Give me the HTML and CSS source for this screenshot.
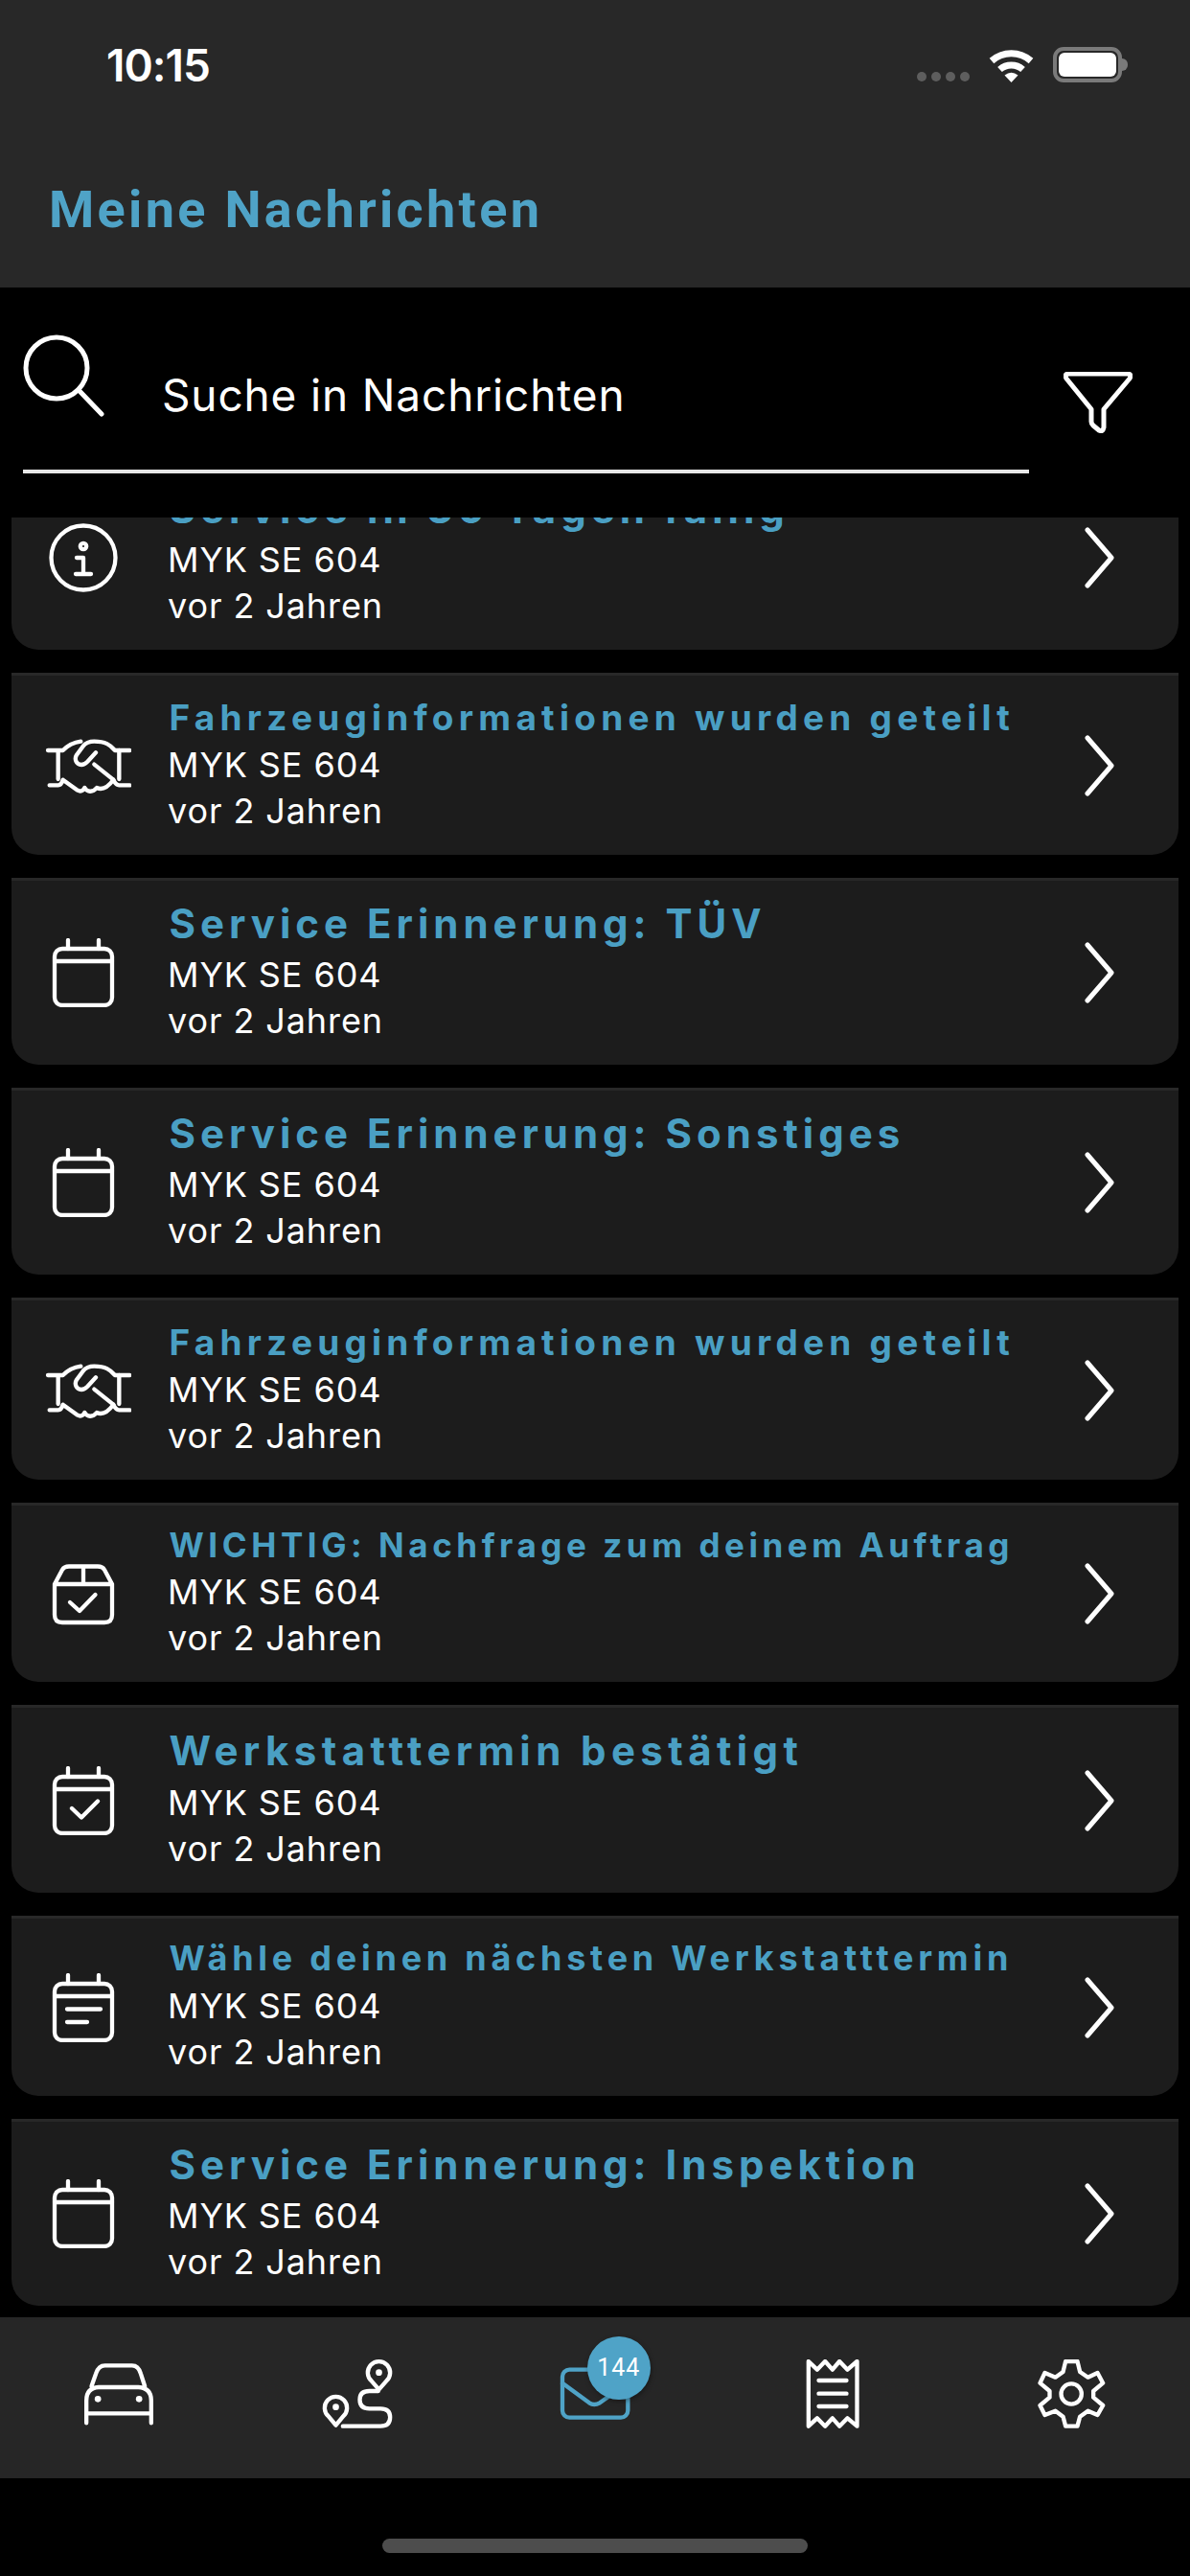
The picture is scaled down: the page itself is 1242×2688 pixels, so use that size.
FILE: index.html
```html
<!DOCTYPE html>
<html lang="de">
<head>
    <meta charset="UTF-8">
    <meta name="viewport" content="width=device-width, initial-scale=1.0">
    <title>Meine Nachrichten</title>
    <link rel="stylesheet" href="styles.css">
</head>
<body>
    <svg class="sprite" xmlns="http://www.w3.org/2000/svg">
        <symbol id="i-info" viewBox="0 0 100 72">
            <circle cx="50" cy="36" r="33.5"/>
            <path d="M43 36H50V53M42 53H58"/>
            <circle class="fill" cx="50" cy="24" r="3.2"/>
        </symbol>
        <symbol id="i-hands" viewBox="21 93 300 216">
            <g stroke-width="13">
                <path d="M60 153H107C125 135 140 128 163 125M92 153V243M65 262H92C100 262 104 256 107 245L153 278C162 283 170 280 175 270C183 284 200 286 213 270C228 277 245 272 265 245L205 197"/>
                <path d="M316 153H270C255 135 240 125 205 125C188 125 178 130 170 140L150 167C142 180 148 197 165 198C172 198 178 194 184 188L210 160"/>
                <path d="M283 153V243M316 262H283C276 262 270 256 265 245"/>
            </g>
        </symbol>
        <symbol id="i-cal" viewBox="0 0 100 72">
            <rect x="20" y="11" width="60" height="59" rx="8"/>
            <path d="M20 24H80M34 2V11M66 2V11"/>
        </symbol>
        <symbol id="i-cal-check" viewBox="0 0 100 72">
            <rect x="20" y="11" width="60" height="59" rx="8"/>
            <path d="M20 24H80M34 2V11M66 2V11M38 44L48 53.5L65 36.5"/>
        </symbol>
        <symbol id="i-cal-lines" viewBox="0 0 100 72">
            <rect x="20" y="11" width="60" height="59" rx="8"/>
            <path d="M20 24H80M34 2V11M66 2V11M33 37.5H68M33 51H54"/>
        </symbol>
        <symbol id="i-box" viewBox="0 0 100 72">
            <path d="M20 26L28 11Q30 7.500 35 7.500H65Q70 7.500 72 11L80 26V58Q80 66 72 66H28Q20 66 20 58ZM20 26H80M50 7.500V26M36 45L46 54L62.500 37"/>
        </symbol>
        <symbol id="i-chev" viewBox="0 0 31 64">
            <path d="M3 3L28 32L3 61"/>
        </symbol>
    </svg>

    <header class="top">
        <div class="status">
            <span class="time">10:15</span>
            <div class="status-icons">
                <div class="dots"><i></i><i></i><i></i><i></i></div>
                <svg class="wifi" width="47" height="36" viewBox="0 0 47 36">
                    <path d="M3 13.500A31 31 0 0 1 44 13.500M11.500 22.500A18 18 0 0 1 35.500 22.500" fill="none" stroke="#fff" stroke-width="7"/>
                    <path d="M23.500 36L16.500 28.500Q23.500 23 30.500 28.500Z" fill="#fff"/>
                </svg>
                <div class="battery"><div class="battery-fill"></div></div>
            </div>
        </div>
        <h1 class="page-title">Meine Nachrichten</h1>
    </header>

    <section class="search">
        <div class="search-field">
            <svg class="search-icon" width="85" height="86" viewBox="0 0 85 86">
                <circle cx="35" cy="35" r="32"/>
                <path d="M58 58L82 83"/>
            </svg>
            <span class="search-text">Suche in Nachrichten</span>
        </div>
        <svg class="filter-icon" width="72" height="64" viewBox="0 0 72 64">
            <path d="M6 2H66Q72 2 69 7L42 39V58Q41 63 37 61L31 56Q29 54 29 52V39L3 7Q0 2 6 2Z"/>
        </svg>
    </section>

    <main class="list">
        <div class="list-inner">
            <article class="card">
                <svg class="icon"><use href="#i-info"/></svg>
                <div class="text">
                    <h2 class="title title-lg">Service in 30 Tagen fällig</h2>
                    <p>MYK SE 604</p>
                    <p>vor 2 Jahren</p>
                </div>
                <svg class="chev"><use href="#i-chev"/></svg>
            </article>
            <article class="card">
                <svg class="icon"><use href="#i-hands"/></svg>
                <div class="text">
                    <h2 class="title title-md">Fahrzeuginformationen wurden geteilt</h2>
                    <p>MYK SE 604</p>
                    <p>vor 2 Jahren</p>
                </div>
                <svg class="chev"><use href="#i-chev"/></svg>
            </article>
            <article class="card">
                <svg class="icon"><use href="#i-cal"/></svg>
                <div class="text">
                    <h2 class="title title-lg">Service Erinnerung: TÜV</h2>
                    <p>MYK SE 604</p>
                    <p>vor 2 Jahren</p>
                </div>
                <svg class="chev"><use href="#i-chev"/></svg>
            </article>
            <article class="card">
                <svg class="icon"><use href="#i-cal"/></svg>
                <div class="text">
                    <h2 class="title title-lg">Service Erinnerung: Sonstiges</h2>
                    <p>MYK SE 604</p>
                    <p>vor 2 Jahren</p>
                </div>
                <svg class="chev"><use href="#i-chev"/></svg>
            </article>
            <article class="card">
                <svg class="icon"><use href="#i-hands"/></svg>
                <div class="text">
                    <h2 class="title title-md">Fahrzeuginformationen wurden geteilt</h2>
                    <p>MYK SE 604</p>
                    <p>vor 2 Jahren</p>
                </div>
                <svg class="chev"><use href="#i-chev"/></svg>
            </article>
            <article class="card">
                <svg class="icon"><use href="#i-box"/></svg>
                <div class="text">
                    <h2 class="title title-sm">WICHTIG: Nachfrage zum deinem Auftrag</h2>
                    <p>MYK SE 604</p>
                    <p>vor 2 Jahren</p>
                </div>
                <svg class="chev"><use href="#i-chev"/></svg>
            </article>
            <article class="card">
                <svg class="icon"><use href="#i-cal-check"/></svg>
                <div class="text">
                    <h2 class="title title-lg title-wide">Werkstatttermin bestätigt</h2>
                    <p>MYK SE 604</p>
                    <p>vor 2 Jahren</p>
                </div>
                <svg class="chev"><use href="#i-chev"/></svg>
            </article>
            <article class="card">
                <svg class="icon"><use href="#i-cal-lines"/></svg>
                <div class="text">
                    <h2 class="title title-sm title-sm-wide">Wähle deinen nächsten Werkstatttermin</h2>
                    <p>MYK SE 604</p>
                    <p>vor 2 Jahren</p>
                </div>
                <svg class="chev"><use href="#i-chev"/></svg>
            </article>
            <article class="card">
                <svg class="icon"><use href="#i-cal"/></svg>
                <div class="text">
                    <h2 class="title title-lg">Service Erinnerung: Inspektion</h2>
                    <p>MYK SE 604</p>
                    <p>vor 2 Jahren</p>
                </div>
                <svg class="chev"><use href="#i-chev"/></svg>
            </article>
        </div>
    </main>

    <nav class="tabs">
        <div class="tab">
            <svg class="tab-icon" viewBox="73.500 36 240 216">
                <path d="M108 120L122 80Q130 55 150 55H235Q255 55 262 80L275 120M92 235V165Q92 125 130 123H255Q295 125 295 165V235M92 205H295"/>
                <circle class="fill" cx="128" cy="160" r="10"/>
                <circle class="fill" cx="257" cy="160" r="10"/>
            </svg>
        </div>
        <div class="tab">
            <svg class="tab-icon" viewBox="817.500 36 240 216">
                <path d="M1005 130L982 104A35 35 0 1 1 1028 104ZM870 242L847 214A35 35 0 1 1 893 214ZM1003 135H975Q945 135 945 162Q945 190 975 190H1010Q1040 190 1040 217Q1040 245 1010 245H892"/>
                <circle class="fill" cx="1005" cy="77" r="10"/>
                <circle class="fill" cx="870" cy="185" r="10"/>
            </svg>
        </div>
        <div class="tab tab-active">
            <svg class="tab-icon" viewBox="123 126 240 216">
                <rect x="141" y="158" width="205" height="150" rx="22"/>
                <path d="M141 200L225 262Q240 272 258 262L346 200"/>
            </svg>
            <span class="badge">144</span>
        </div>
        <div class="tab">
            <svg class="tab-icon" viewBox="58.500 36 240 216">
                <path d="M103 42L130 68L155 42L178 68L200 42L225 68L255 42V245L225 220L200 245L178 220L155 245L130 220L103 245ZM135 102H222M135 143H222M135 183H222"/>
            </svg>
        </div>
        <div class="tab">
            <svg class="tab-icon" viewBox="802.500 36 240 216">
                <path d="M905 42H942L950 75L975 92L1005 78L1022 110L992 135V155L1022 180L1005 210L975 197L950 215L942 245H905L897 215L873 197L840 210L825 180L855 155V135L825 110L840 78L873 92L897 75Z"/>
                <circle cx="923" cy="144" r="32"/>
            </svg>
        </div>
    </nav>

    <div class="home-area"><div class="home-bar"></div></div>
</body>
</html>
```

FILE: styles.css
```css
* {
    box-sizing: border-box;
}
body {
    margin: 0;
    width: 1242px;
    height: 2688px;
    display: flex;
    flex-direction: column;
    overflow: hidden;
    background: #000;
    color: #fff;
    font-family: Inter, "Noto Sans", sans-serif;
}
.sprite {
    display: none;
}
.top {
    height: 300px;
    flex: none;
    background: #282828;
    padding: 44px 57px 0 51px;
}
.status {
    display: flex;
    justify-content: space-between;
    align-items: flex-start;
    padding-left: 60px;
    height: 50px;
}
.time {
    font-size: 46px;
    font-weight: 600;
    line-height: 48px;
    letter-spacing: -1px;
}
.status-icons {
    display: flex;
    align-items: flex-end;
    margin-top: 5px;
    margin-right: 14px;
}
.dots {
    display: flex;
    gap: 5px;
    margin-right: 20px;
    margin-bottom: 1px;
}
.dots i {
    width: 10px;
    height: 10px;
    border-radius: 5px;
    background: #5e5e5e;
}
.wifi {
    margin-right: 20px;
}
.battery {
    position: relative;
    width: 72px;
    height: 37px;
    padding: 2px;
    border: 4px solid #7a7a7a;
    border-radius: 11px;
}
.battery::after {
    content: "";
    position: absolute;
    left: 68px;
    top: 8px;
    width: 6px;
    height: 13px;
    background: #7a7a7a;
    border-radius: 0 6px 6px 0;
}
.battery-fill {
    height: 100%;
    background: #fff;
    border-radius: 6px;
}
.page-title {
    margin: 93px 0 0;
    font-family: Roboto, sans-serif;
    font-size: 54px;
    line-height: 64px;
    font-weight: 700;
    letter-spacing: 3.3px;
    color: #4fa3c7;
}
.search {
    height: 240px;
    flex: none;
    display: flex;
    padding: 49px 0 0 24px;
}
.search-field {
    width: 1050px;
    height: 145px;
    display: flex;
    border-bottom: 4px solid #e8e8e8;
}
.search-icon, .filter-icon {
    flex: none;
    fill: none;
    stroke: #fff;
    stroke-width: 5;
    stroke-linecap: round;
    stroke-linejoin: round;
}
.search-text {
    margin: 31px 0 0 60px;
    font-size: 46px;
    line-height: 64px;
    letter-spacing: 0.85px;
}
.filter-icon {
    margin: 39px 0 0 36px;
}
.list {
    flex: 1;
    min-height: 0;
    overflow: hidden;
}
.list-inner {
    display: flex;
    flex-direction: column;
    gap: 24px;
    margin-top: -57px;
    padding: 0 12px;
}
.card {
    display: flex;
    align-items: center;
    padding: 22px 0;
    background: #1c1c1c;
    border-top: 3px solid #282828;
    border-radius: 0 0 28px 28px;
}
.icon {
    flex: none;
    width: 100px;
    height: 72px;
    margin: 0 38px 0 25px;
    fill: none;
    stroke: #fff;
    stroke-width: 4.3;
    stroke-linecap: round;
    stroke-linejoin: round;
}
.icon .fill, .tab-icon .fill {
    fill: currentColor;
    stroke: none;
}
.text {
    flex: 1;
    min-width: 0;
}
.text p {
    margin: 0;
    font-size: 36px;
    line-height: 48px;
    letter-spacing: 0.9px;
    color: #fff;
}
.title {
    margin: 0 0 0 1.5px;
    font-weight: 700;
    color: #4a9fc3;
    white-space: nowrap;
}
.title-lg {
    font-size: 42px;
    line-height: 46px;
    margin-bottom: 6px;
    letter-spacing: 5px;
}
.title-wide {
    margin-bottom: 7px;
    letter-spacing: 5.4px;
}
.title-md {
    font-size: 37px;
    line-height: 43px;
    margin-bottom: 4px;
    letter-spacing: 5.25px;
}
.title-sm {
    font-size: 35px;
    line-height: 38px;
    margin-bottom: 6px;
    letter-spacing: 4.55px;
}
.title-sm-wide {
    margin-bottom: 7px;
    font-size: 36px;
    letter-spacing: 4.75px;
}
.chev {
    flex: none;
    width: 31px;
    height: 64px;
    margin-right: 67px;
    fill: none;
    stroke: #fff;
    stroke-width: 5;
    stroke-linecap: round;
    stroke-linejoin: round;
}
.tabs {
    height: 168px;
    flex: none;
    display: flex;
    padding-top: 44px;
    background: #262626;
}
.tab {
    flex: 1;
    position: relative;
    display: flex;
    justify-content: center;
    align-items: flex-start;
    color: #fff;
}
.tab-icon {
    width: 80px;
    height: 72px;
    fill: none;
    stroke: currentColor;
    stroke-width: 13;
    stroke-linecap: round;
    stroke-linejoin: round;
}
.tab-active {
    color: #4fa3c7;
}
.badge {
    position: absolute;
    left: 116px;
    top: -24px;
    width: 66px;
    height: 66px;
    border-radius: 50%;
    background: #4fa3c7;
    box-shadow: 1px 2px 5px rgba(0, 0, 0, 0.35);
    color: #fff;
    font-family: Roboto, sans-serif;
    font-size: 25px;
    line-height: 66px;
    letter-spacing: 1px;
    text-align: center;
}
.home-area {
    height: 102px;
    flex: none;
    padding-top: 63px;
}
.home-bar {
    width: 444px;
    height: 15px;
    margin: 0 auto;
    border-radius: 8px;
    background: #4d4d4d;
}
```
